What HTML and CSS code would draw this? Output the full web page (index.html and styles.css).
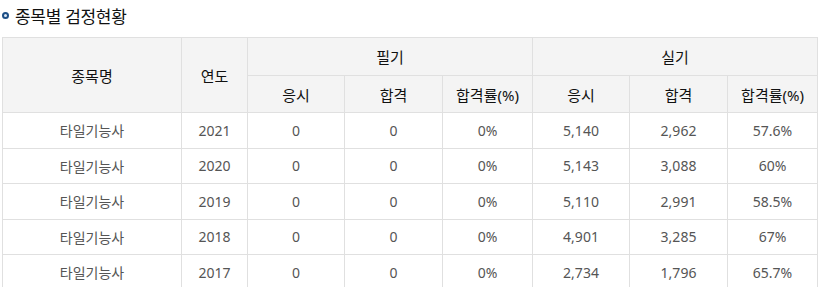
FILE: index.html
```html
<!DOCTYPE html>
<html lang="ko">
<head>
<meta charset="utf-8">
<link rel="stylesheet" href="styles.css">
</head>
<body>
<div class="wrap">
  <h2 class="title"><span class="bullet"></span>종목별 검정현황</h2>
  <table class="stats">
    <colgroup>
      <col class="c-name"><col class="c-year">
      <col class="c-a"><col class="c-b"><col class="c-c">
      <col class="c-a"><col class="c-b"><col class="c-c">
    </colgroup>
    <thead>
      <tr class="h1">
        <th rowspan="2">종목명</th>
        <th rowspan="2">연도</th>
        <th colspan="3">필기</th>
        <th colspan="3">실기</th>
      </tr>
      <tr class="h2">
        <th>응시</th><th>합격</th><th>합격률(%)</th>
        <th>응시</th><th>합격</th><th>합격률(%)</th>
      </tr>
    </thead>
    <tbody>
      <tr><td>타일기능사</td><td>2021</td><td>0</td><td>0</td><td>0%</td><td>5,140</td><td>2,962</td><td>57.6%</td></tr>
      <tr><td>타일기능사</td><td>2020</td><td>0</td><td>0</td><td>0%</td><td>5,143</td><td>3,088</td><td>60%</td></tr>
      <tr><td>타일기능사</td><td>2019</td><td>0</td><td>0</td><td>0%</td><td>5,110</td><td>2,991</td><td>58.5%</td></tr>
      <tr><td>타일기능사</td><td>2018</td><td>0</td><td>0</td><td>0%</td><td>4,901</td><td>3,285</td><td>67%</td></tr>
      <tr><td>타일기능사</td><td>2017</td><td>0</td><td>0</td><td>0%</td><td>2,734</td><td>1,796</td><td>65.7%</td></tr>
    </tbody>
  </table>
</div>
</body>
</html>
```
FILE: styles.css
```css
html, body {
  margin: 0;
  padding: 0;
  background: #fff;
}
body {
  font-family: "Noto Sans", "Noto Sans CJK KR", sans-serif;
}
.wrap {
  padding: 0 2px;
}
.title {
  display: flex;
  align-items: center;
  margin: 0;
  height: 30px;
  padding-bottom: 7px;
  box-sizing: content-box;
  font-size: 17px;
  font-weight: normal;
  color: #111;
  letter-spacing: -0.3px;
}
.bullet {
  display: inline-block;
  width: 3px;
  height: 3px;
  border: 2.5px solid #1d4f86;
  border-radius: 50%;
  background: #dfe9f4;
  margin-right: 6px;
}
.stats {
  border-collapse: collapse;
  table-layout: fixed;
  width: 816px;
  font-size: 14px;
}
.c-name { width: 179px; }
.c-year { width: 66px; }
.c-a { width: 97px; }
.c-b { width: 98px; }
.c-c { width: 90px; }
.stats th, .stats td {
  border: 1px solid #e0e0e0;
  text-align: center;
  padding: 0;
}
.stats th {
  background: #f4f4f4;
  color: #111;
  font-weight: normal;
  font-size: 15px;
}
.stats tr.h1 th { height: 37px; }
.stats tr.h2 th { height: 36px; }
.stats td {
  height: 34.5px;
  color: #555;
}
```
